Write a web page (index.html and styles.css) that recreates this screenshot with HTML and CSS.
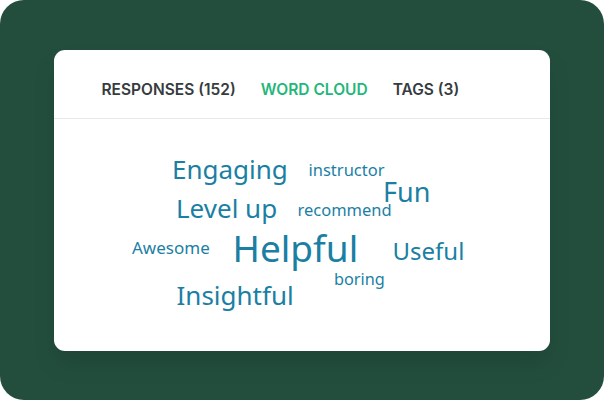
FILE: index.html
```html
<!DOCTYPE html>
<html>
<head>
<meta charset="utf-8">
<link rel="stylesheet" href="styles.css">
</head>
<body>
<div class="frame">
  <div class="card">
    <div class="tabs">
      <span class="tab">RESPONSES (152)</span>
      <span class="tab active">WORD CLOUD</span>
      <span class="tab">TAGS (3)</span>
    </div>
    <div class="cloud">
      <span class="word" style="left:118px;top:39px;font-size:26px">Engaging</span>
      <span class="word" style="left:254.5px;top:43.7px;font-size:16.5px">instructor</span>
      <span class="word" style="left:329px;top:60.6px;font-size:27px">Fun</span>
      <span class="word" style="left:122px;top:78px;font-size:26px">Level up</span>
      <span class="word" style="left:243.5px;top:84.4px;font-size:16.5px">recommend</span>
      <span class="word" style="left:78px;top:120.9px;font-size:17px">Awesome</span>
      <span class="word" style="left:178.5px;top:111.9px;font-size:37px">Helpful</span>
      <span class="word" style="left:338.5px;top:120.7px;font-size:24px">Useful</span>
      <span class="word" style="left:280px;top:152.8px;font-size:16.3px">boring</span>
      <span class="word" style="left:122.5px;top:164.8px;font-size:26px">Insightful</span>
    </div>
  </div>
</div>
</body>
</html>
```
FILE: styles.css
```css
html, body {
  margin: 0;
  padding: 0;
  background: #ffffff;
}
.frame {
  width: 604px;
  height: 400px;
  background: #234e3d;
  border-radius: 24px;
  padding: 50px 54px 0 54px;
  box-sizing: border-box;
}
.card {
  width: 496px;
  height: 301px;
  background: #ffffff;
  border-radius: 11px;
  box-shadow: 0 14px 22px rgba(0, 0, 0, 0.10);
  display: flex;
  flex-direction: column;
}
.tabs {
  height: 69px;
  display: flex;
  align-items: center;
  gap: 25px;
  padding: 10px 0 0 47.5px;
  box-sizing: border-box;
  border-bottom: 1px solid #e9e9e9;
  font-family: "Inter", "Liberation Sans", sans-serif;
  font-weight: 600;
  font-size: 15.5px;
}
.tab {
  color: #363b40;
}
.tab.active {
  color: #1fb77a;
}
.cloud {
  position: relative;
  flex: 1;
  font-family: "Noto Sans", sans-serif;
  color: #1b7fa4;
}
.word {
  position: absolute;
  line-height: 0.9;
  white-space: nowrap;
}
```
